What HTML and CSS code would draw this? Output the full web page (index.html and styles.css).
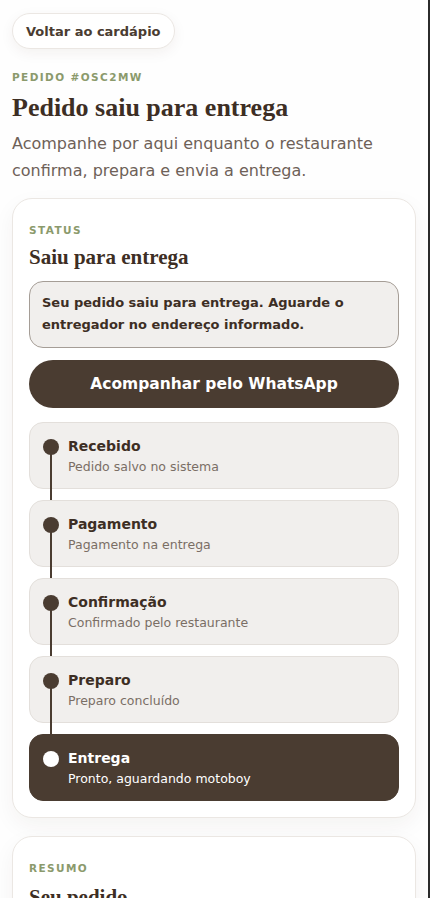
FILE: index.html
```html
<!DOCTYPE html>
<html lang="pt-BR">
<head>
<meta charset="utf-8">
<meta name="viewport" content="width=device-width, initial-scale=1">
<title>Pedido #OSC2MW</title>
<link rel="stylesheet" href="styles.css">
</head>
<body>
<div class="page">
  <a class="back-btn" href="#">Voltar ao cardápio</a>
  <div class="eyebrow head-eyebrow">PEDIDO #OSC2MW</div>
  <h1 class="title">Pedido saiu para entrega</h1>
  <p class="lead">Acompanhe por aqui enquanto o restaurante confirma, prepara e envia a entrega.</p>

  <section class="card">
    <div class="eyebrow">STATUS</div>
    <h2 class="card-title">Saiu para entrega</h2>
    <div class="notice">Seu pedido saiu para entrega. Aguarde o entregador no endereço informado.</div>
    <a class="wa-btn" href="#">Acompanhar pelo WhatsApp</a>
    <ol class="steps">
      <li class="step done">
        <span class="dot"></span>
        <div class="step-title">Recebido</div>
        <div class="step-sub">Pedido salvo no sistema</div>
      </li>
      <li class="step done">
        <span class="dot"></span>
        <div class="step-title">Pagamento</div>
        <div class="step-sub">Pagamento na entrega</div>
      </li>
      <li class="step done">
        <span class="dot"></span>
        <div class="step-title">Confirmação</div>
        <div class="step-sub">Confirmado pelo restaurante</div>
      </li>
      <li class="step done">
        <span class="dot"></span>
        <div class="step-title">Preparo</div>
        <div class="step-sub">Preparo concluído</div>
      </li>
      <li class="step current">
        <span class="dot"></span>
        <div class="step-title">Entrega</div>
        <div class="step-sub">Pronto, aguardando motoboy</div>
      </li>
    </ol>
  </section>

  <section class="card summary">
    <div class="eyebrow">RESUMO</div>
    <h2 class="card-title">Seu pedido</h2>
  </section>
</div>
</body>
</html>
```
FILE: styles.css
```css
* { box-sizing: border-box; }
html, body { margin: 0; padding: 0; }
body {
  background: #fefefe;
  font-family: "DejaVu Sans", "Noto Sans", sans-serif;
  color: #4a3c31;
}
.page {
  min-height: 100vh;
  border-right: 2px solid #2b2b2b;
  padding: 13px 12px 40px 12px;
  display: flex;
  flex-direction: column;
  align-items: stretch;
}
.back-btn {
  align-self: flex-start;
  height: 36px;
  padding: 0 13px;
  display: flex;
  align-items: center;
  border: 1px solid #ebe7e3;
  border-radius: 18px;
  background: #fff;
  box-shadow: 0 4px 14px rgba(60, 40, 20, 0.06);
  color: #4a3c31;
  font-size: 13px;
  font-weight: 600;
  text-decoration: none;
}
.eyebrow {
  font-size: 10.5px;
  line-height: 14px;
  font-weight: 700;
  letter-spacing: 1.4px;
  color: #8b9a6c;
}
.head-eyebrow { margin-top: 21px; }
.title {
  margin: 8px 0 0 0;
  font-family: "Liberation Serif", "DejaVu Serif", serif;
  font-size: 26px;
  line-height: 32px;
  font-weight: 700;
  color: #3d2e24;
}
.lead {
  margin: 6px 0 0 0;
  font-size: 16px;
  line-height: 27px;
  color: #6e6158;
}
.card {
  margin-top: 14px;
  background: #fff;
  border: 1px solid #ebe7e3;
  border-radius: 20px;
  box-shadow: 0 8px 22px rgba(60, 40, 20, 0.05);
  padding: 24px 16px 16px 16px;
  display: flex;
  flex-direction: column;
}
.card-title {
  margin: 6px 0 0 0;
  font-family: "Liberation Serif", "DejaVu Serif", serif;
  font-size: 21px;
  line-height: 28px;
  font-weight: 700;
  color: #3d2e24;
}
.notice {
  margin-top: 10px;
  background: #f1efed;
  border: 1px solid #a59d96;
  border-radius: 14px;
  padding: 10px 12px 11px 12px;
  font-size: 13px;
  line-height: 22px;
  font-weight: 600;
  color: #3d2e24;
}
.wa-btn {
  margin-top: 12px;
  height: 48px;
  border-radius: 24px;
  background: #4a3c31;
  color: #fff;
  display: flex;
  align-items: center;
  justify-content: center;
  font-size: 15.5px;
  font-weight: 700;
  text-decoration: none;
}
.steps {
  list-style: none;
  margin: 14px 0 0 0;
  padding: 0;
  display: flex;
  flex-direction: column;
  gap: 11px;
}
.step {
  position: relative;
  background: #f1efed;
  border: 1px solid #e3dfdb;
  border-radius: 14px;
  padding: 12px 12px 11px 38px;
  min-height: 67px;
}
.dot {
  position: absolute;
  left: 13px;
  top: 16px;
  width: 16px;
  height: 16px;
  border-radius: 50%;
  background: #4a3c31;
}
.step.done::after {
  content: "";
  position: absolute;
  left: 20px;
  top: 24px;
  width: 2px;
  height: calc(100% + 12px);
  background: #4a3c31;
}
.step-title {
  font-size: 14px;
  line-height: 22px;
  font-weight: 700;
  color: #3d2e24;
}
.step-sub {
  font-size: 12.5px;
  line-height: 20px;
  color: #7a6e65;
}
.step.current {
  background: #4a3c31;
  border-color: #4a3c31;
}
.step.current .dot { background: #fff; }
.step.current .step-title,
.step.current .step-sub { color: #fff; }
.summary {
  margin-top: 18px;
  padding-top: 24px;
}
.summary .card-title { margin-top: 8px; }
```
